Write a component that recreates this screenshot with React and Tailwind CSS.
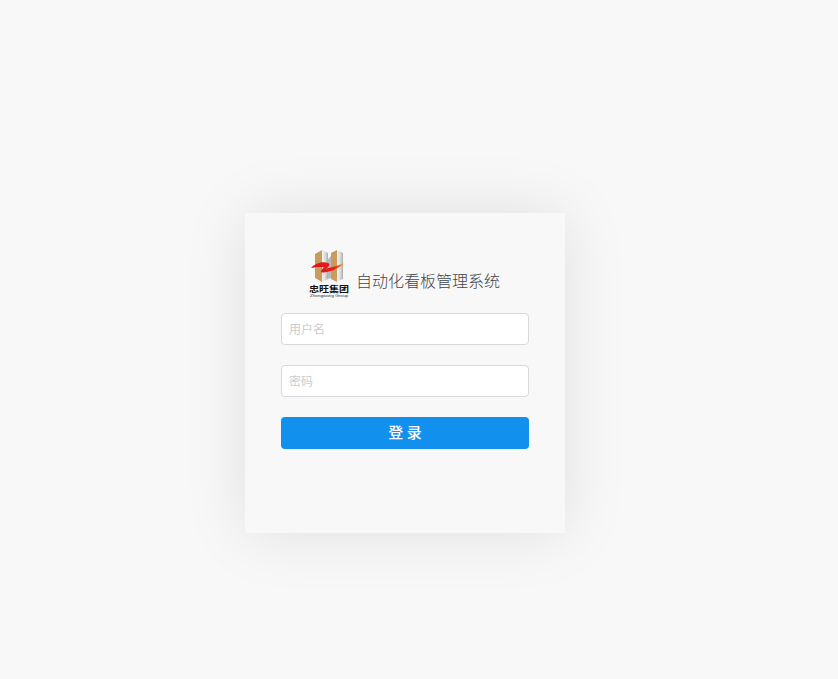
function Logo() {
  return (
    <svg width="42" height="50" viewBox="0 0 42 50" className="block shrink-0">
      <defs>
        <linearGradient id="silver" x1="0" x2="1" y1="0" y2="0">
          <stop offset="0" stopColor="#f4f4f4" />
          <stop offset="0.6" stopColor="#d8d8d8" />
          <stop offset="1" stopColor="#a8a8a8" />
        </linearGradient>
        <linearGradient id="ribbon" x1="0" x2="1" y1="0" y2="0">
          <stop offset="0" stopColor="#e3101a" />
          <stop offset="0.7" stopColor="#e8201a" />
          <stop offset="1" stopColor="#f5a800" />
        </linearGradient>
      </defs>
      <path d="M7 6 L14 2 V34 L7 30 Z" fill="#c99c5e" />
      <path d="M14 2 L20 5 V31 L14 34 Z" fill="url(#silver)" />
      <path d="M20 11 L23 8 V30 L20 31 Z" fill="#b9b9b9" />
      <path d="M23 5 L29 2 V34 L23 31 Z" fill="#c99c5e" />
      <path d="M29 2 L35 5 V31 L29 34 Z" fill="url(#silver)" />
      <path
        d="M3 20 C7 15.5 14 13 20 15 C23 16 21 18.5 18 20.5 C23 20 29 17.5 36 15.5 C31 20 24 23.5 16 24.5 C12 25 12 22.5 16 19.5 C12 18.5 7 19.5 3 20 Z"
        fill="url(#ribbon)"
      />
      <text x="1" y="44" fontSize="8.5" fontWeight="700" fill="#111" textLength="40" lengthAdjust="spacingAndGlyphs" fontFamily="'Noto Sans CJK SC', sans-serif">
        忠旺集团
      </text>
      <text x="2" y="49" fontSize="3.5" fill="#333" textLength="38" lengthAdjust="spacingAndGlyphs" fontFamily="'Liberation Sans', sans-serif">
        Zhongwang Group
      </text>
    </svg>
  );
}

export default function App() {
  return (
    <div className="h-[679px] overflow-hidden bg-[#f8f8f8] pt-[213px] pl-[245px] font-['Microsoft_YaHei','Noto_Sans_CJK_SC',sans-serif]">
      <div className="h-80 w-80 bg-[#f8f8f8] px-9 pt-[35px] shadow-[0_0_60px_rgba(0,0,0,0.1)]">
        <div className="flex h-[65px] items-start pl-[27px]">
          <Logo />
          <span className="mt-[21px] ml-1.5 text-base leading-[22px] font-light text-[#43464b]">自动化看板管理系统</span>
        </div>
        <form>
          <input
            placeholder="用户名"
            className="block h-8 w-full rounded border border-[#d9d9d9] bg-white px-[7px] pb-px text-xs outline-none placeholder:text-[#cccccc]"
          />
          <input
            type="password"
            placeholder="密码"
            className="mt-5 block h-8 w-full rounded border border-[#d9d9d9] bg-white px-[7px] pb-px text-xs outline-none placeholder:text-[#cccccc]"
          />
          <button
            type="button"
            className="mt-5 block h-8 w-full rounded bg-[#1290ee] pb-[2px] text-[15px] font-medium text-white"
          >
            登 录
          </button>
        </form>
      </div>
    </div>
  );
}
